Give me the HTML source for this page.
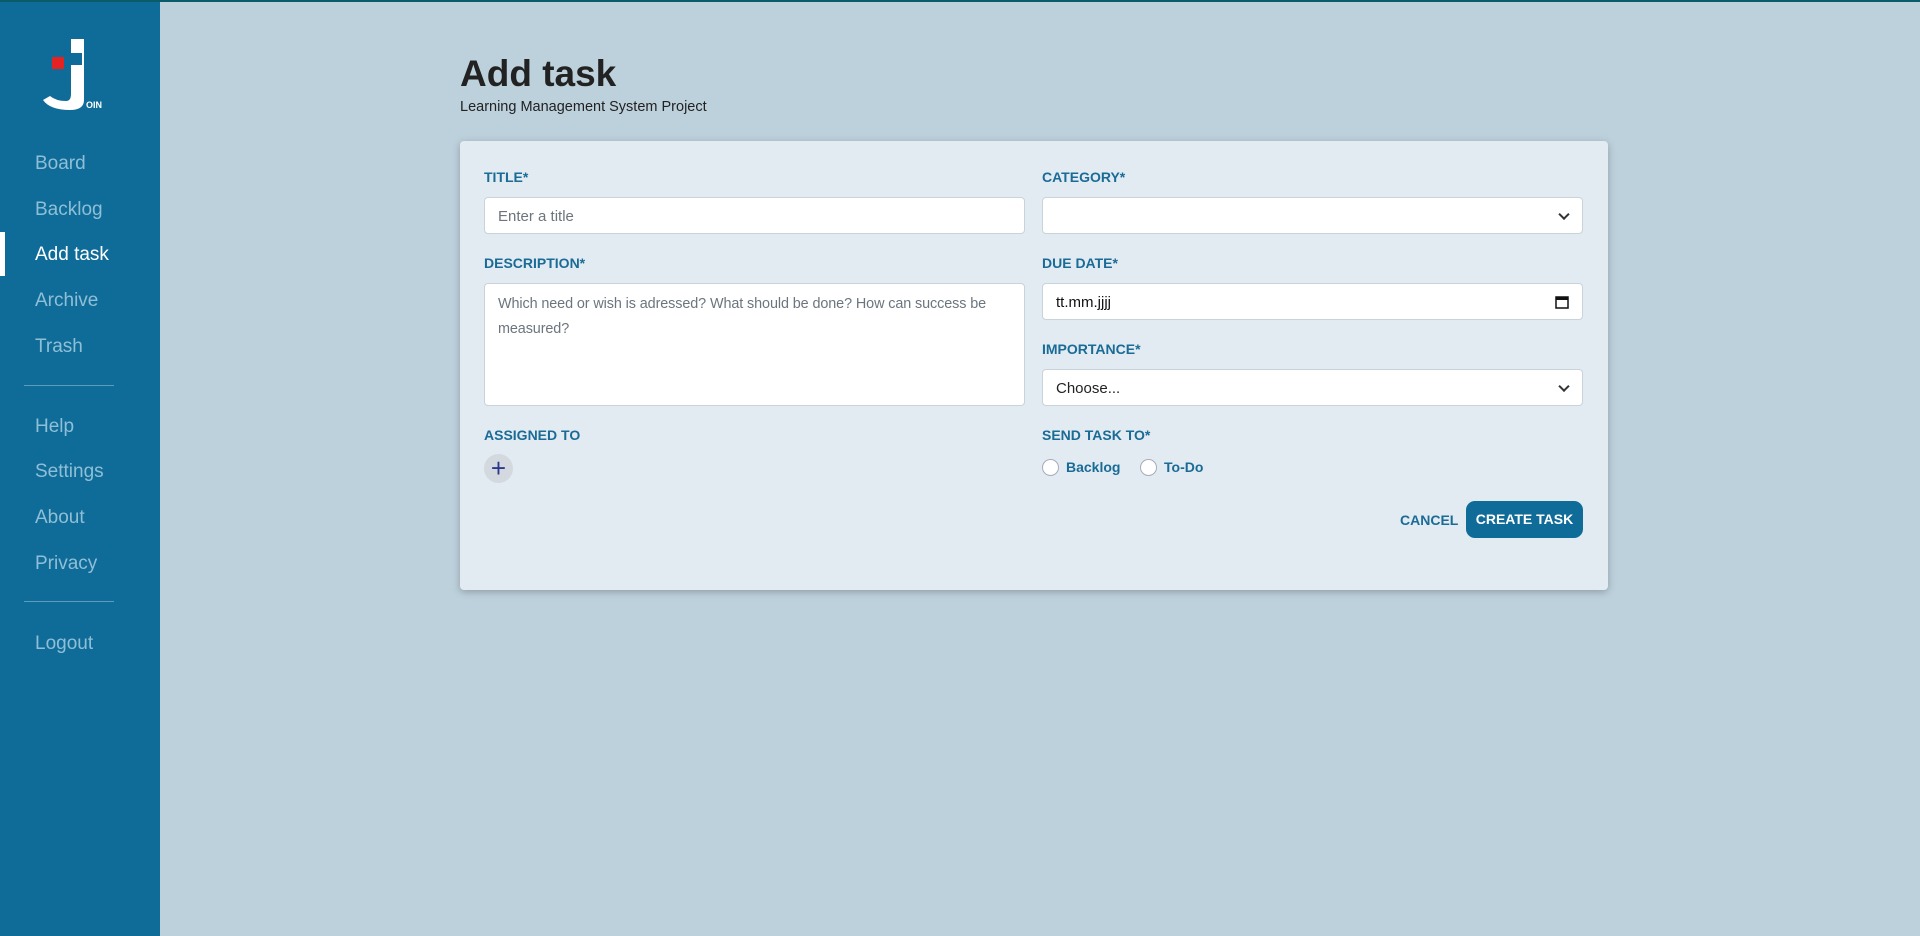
<!DOCTYPE html>
<html><head><meta charset="utf-8"><style>
*{box-sizing:border-box;margin:0;padding:0}
body{width:1920px;height:936px;background:#bdd1dc;font-family:"Liberation Sans",sans-serif;position:relative;overflow:hidden}
.top{position:absolute;left:0;top:0;width:1920px;height:2px;background:#0b5c6a}
.side{position:absolute;left:0;top:2px;width:160px;height:934px;background:#0f6c99}
.nav{position:absolute;left:35px;font-size:19px;color:#8fbfd6;transform:translateY(-50%)}
.nav.act{color:#fff}
.div{position:absolute;left:24px;width:90px;height:1px;background:#5d9cbd}
.lbl{position:absolute;font-size:14px;font-weight:bold;color:#1a6b96;transform:translateY(-50%)}
.inp{position:absolute;background:#fff;border:1px solid #c9d3da;border-radius:4px;font-size:15px;color:#6c757d;padding-left:13px}
.chev{position:absolute;right:14px;top:50%;width:8px;height:8px;border-right:2px solid #333;border-bottom:2px solid #333;transform:translateY(-70%) rotate(45deg)}
.radio{position:absolute;width:17px;height:17px;border-radius:50%;background:#fff;border:1px solid #aab;top:459px}
.rt{position:absolute;top:467px;transform:translateY(-50%);font-size:14px;font-weight:bold;color:#1a6b96}
</style></head><body>
<div class="top"></div>
<div class="side">
 <svg style="position:absolute;left:40px;top:36px" width="70" height="76" viewBox="40 38 70 76">
  <rect x="52" y="57" width="12" height="12" fill="#e52222"/>
  <rect x="71" y="39" width="13" height="44" fill="#fff"/>
  <rect x="71" y="53" width="11" height="12" fill="#0f6c99"/>
  <path d="M71 82 L84 82 L84 100 Q84 110 70 110 Q50 110 43 100 L50 96 Q56 101 66 101 Q71 101 71 94 Z" fill="#fff"/>
  <text x="86" y="108" font-size="9" font-weight="bold" fill="#fff" font-family="Liberation Sans">OIN</text>
 </svg>
 <div style="position:absolute;left:0;top:230px;width:5px;height:44px;background:#fff"></div>
 <div class="nav" style="top:162px">Board</div>
 <div class="nav" style="top:208px">Backlog</div>
 <div class="nav act" style="top:253px">Add task</div>
 <div class="nav" style="top:299px">Archive</div>
 <div class="nav" style="top:345px">Trash</div>
 <div class="div" style="top:383px"></div>
 <div class="nav" style="top:425px">Help</div>
 <div class="nav" style="top:470px">Settings</div>
 <div class="nav" style="top:516px">About</div>
 <div class="nav" style="top:562px">Privacy</div>
 <div class="div" style="top:599px"></div>
 <div class="nav" style="top:642px">Logout</div>
</div>
<div style="position:absolute;left:460px;top:53px;font-size:37px;font-weight:bold;color:#222">Add task</div>
<div style="position:absolute;left:460px;top:99px;font-size:14.5px;color:#222">Learning Management System Project</div>
<div style="position:absolute;left:460px;top:141px;width:1148px;height:449px;background:#e1ebf1;border-radius:4px;box-shadow:0 2px 8px rgba(0,0,0,.25)"></div>
<div class="lbl" style="left:484px;top:177px">TITLE*</div>
<div class="inp" style="left:484px;top:197px;width:541px;height:37px;line-height:37px">Enter a title</div>
<div class="lbl" style="left:484px;top:263px">DESCRIPTION*</div>
<div class="inp" style="left:484px;top:283px;width:541px;height:123px;line-height:25px;padding-top:8px;padding-right:8px;font-size:14.4px;letter-spacing:-0.1px">Which need or wish is adressed? What should be done? How can success be measured?</div>
<div class="lbl" style="left:484px;top:435px">ASSIGNED TO</div>
<div style="position:absolute;left:484px;top:454px;width:29px;height:29px;border-radius:50%;background:#d3d9de;color:#2b3a8a;font-size:26px;line-height:29px;text-align:center">+</div>
<div class="lbl" style="left:1042px;top:177px">CATEGORY*</div>
<div class="inp" style="left:1042px;top:197px;width:541px;height:37px"><span class="chev"></span></div>
<div class="lbl" style="left:1042px;top:263px">DUE DATE*</div>
<div class="inp" style="left:1042px;top:283px;width:541px;height:37px;line-height:37px;color:#111">tt.mm.jjjj
 <svg style="position:absolute;right:13px;top:11px" width="14" height="14" viewBox="0 0 14 14"><rect x="1" y="2" width="12" height="11" fill="none" stroke="#111" stroke-width="1.5"/><rect x="1" y="2" width="12" height="3" fill="#111"/></svg></div>
<div class="lbl" style="left:1042px;top:349px">IMPORTANCE*</div>
<div class="inp" style="left:1042px;top:369px;width:541px;height:37px;line-height:37px;color:#222">Choose...<span class="chev"></span></div>
<div class="lbl" style="left:1042px;top:435px">SEND TASK TO*</div>
<div class="radio" style="left:1042px"></div><div class="rt" style="left:1066px">Backlog</div>
<div class="radio" style="left:1140px"></div><div class="rt" style="left:1164px">To-Do</div>
<div style="position:absolute;left:1400px;top:520px;transform:translateY(-50%);font-size:14px;font-weight:bold;color:#1a6b96">CANCEL</div>
<div style="position:absolute;left:1466px;top:501px;width:117px;height:37px;border-radius:9px;background:#0f6c99;color:#fff;font-size:14px;font-weight:bold;text-align:center;line-height:37px">CREATE TASK</div>
</body></html>
